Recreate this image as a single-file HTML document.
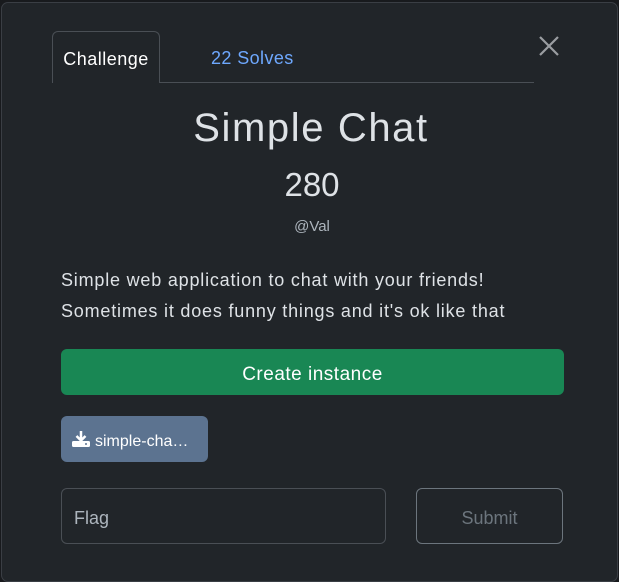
<!DOCTYPE html>
<html><head><style>
body{margin:0;width:619px;height:573px;background:#181a1d;font-family:"Liberation Sans",sans-serif;overflow:hidden;position:relative}
.m{position:absolute;left:1px;top:2px;width:617px;height:580px;background:#212529;border:1px solid #3a3e44;border-radius:7px;box-sizing:border-box}
.a{position:absolute}
.tab{left:52px;top:31px;width:108px;height:52px;border:1px solid #4a4f55;border-bottom:none;border-radius:6px 6px 0 0;box-sizing:border-box;color:#fff;font-size:18px;letter-spacing:0.5px;text-align:center;line-height:54px;background:#212529;z-index:2}
.line{left:52px;top:82px;width:482px;height:1px;background:#4a4f55}
</style></head><body>
<div class="m"></div>
<div class="a tab">Challenge</div>
<div class="a line"></div>
<div class="a" style="left:211px;top:48px;color:#6ea8fe;font-size:18px;letter-spacing:0.4px">22 Solves</div>
<svg class="a" style="left:538px;top:35px" width="22" height="22"><path d="M2 2L20 20M20 2L2 20" stroke="#9a9da1" stroke-width="2.2"/></svg>
<div class="a" style="left:0;width:622px;top:106px;text-align:center;color:#dee2e6;font-size:40px;letter-spacing:1.6px">Simple Chat</div>
<div class="a" style="left:0;width:624px;top:166px;text-align:center;color:#dee2e6;font-size:33px">280</div>
<div class="a" style="left:0;width:624px;top:218px;text-align:center;color:#adb5bd;font-size:15px">@Val</div>
<div class="a" style="left:61px;top:265px;color:#dee2e6;font-size:18px;letter-spacing:0.8px;line-height:31px">Simple web application to chat with your friends!<br>Sometimes it does funny things and it's ok like that</div>
<div class="a" style="left:61px;top:349px;width:503px;height:46px;background:#198754;border-radius:6px;color:#fff;font-size:19px;letter-spacing:0.5px;text-align:center;line-height:52px">Create instance</div>
<div class="a" style="left:61px;top:416px;width:147px;height:46px;background:#5c7390;border-radius:6px;color:#fff;font-size:16px;line-height:52px">
<svg style="position:absolute;left:10px;top:14px" width="20" height="18" viewBox="0 0 20 18"><path d="M10 1V10M5.5 6L10 10.5L14.5 6" stroke="#fff" stroke-width="2.5" fill="none"/><rect x="1" y="11" width="18" height="6" rx="1.5" fill="#fff"/><circle cx="15" cy="14" r="1" fill="#5c7390"/></svg>
<span style="position:absolute;left:34px">simple-cha…</span></div>
<div class="a" style="left:61px;top:488px;width:325px;height:56px;border:1px solid #4a4f55;border-radius:6px;box-sizing:border-box;color:#adb5bd;font-size:18px;line-height:58px;padding-left:12px">Flag</div>
<div class="a" style="left:416px;top:488px;width:147px;height:56px;border:1px solid #6c757d;border-radius:6px;box-sizing:border-box;color:#6c757d;font-size:18px;line-height:58px;text-align:center">Submit</div>
</body></html>
